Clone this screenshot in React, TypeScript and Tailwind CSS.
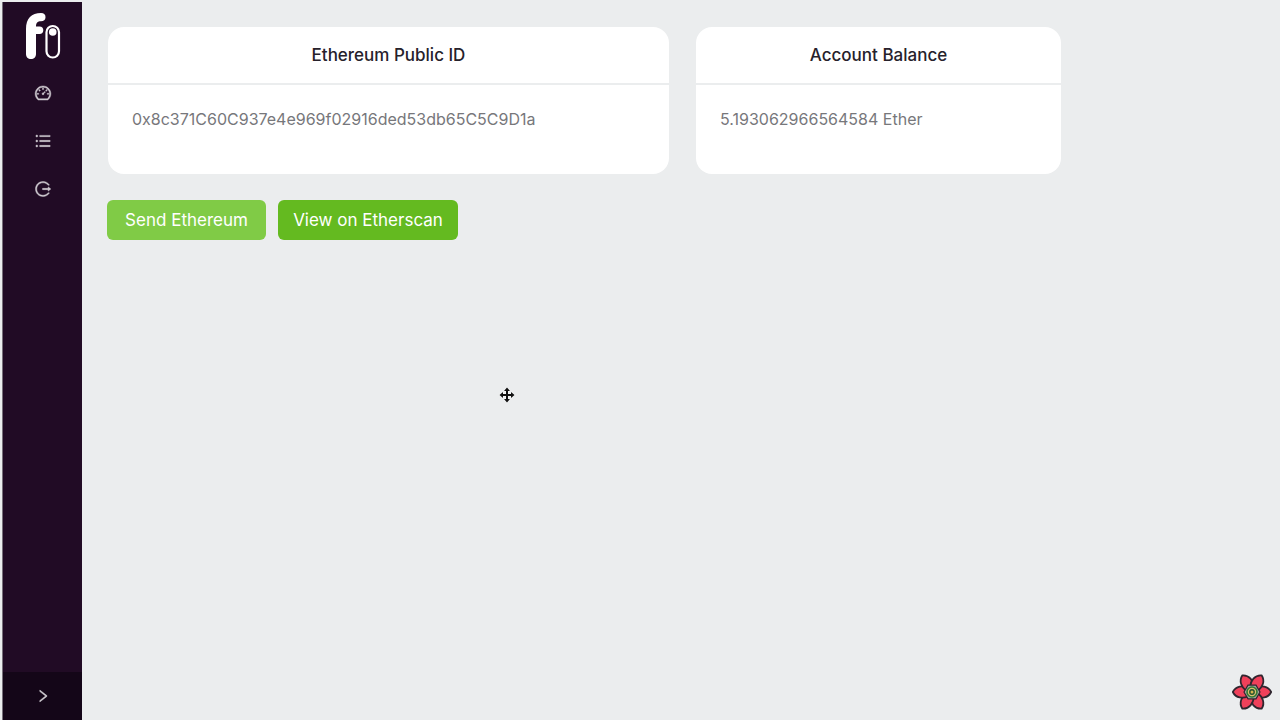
import type { ReactNode } from "react";
import {
  AiOutlineDashboard,
  AiOutlineLogout,
  AiOutlineRight,
  AiOutlineUnorderedList,
} from "react-icons/ai";

const navItems = [
  { label: "Dashboard", icon: AiOutlineDashboard },
  { label: "Transactions", icon: AiOutlineUnorderedList },
  { label: "Log out", icon: AiOutlineLogout },
];

function Logo() {
  return (
    <svg viewBox="0 0 36 48" className="h-12 w-9" aria-hidden="true">
      <path
        d="M1 42V17C1 6.500 6.500 1 16 1C19 1 20.800 2.600 20.500 5.500C20.300 8 18.800 9.200 16 9.200C12.500 9.200 11 11 11 14.500H14.500C17 14.500 18.300 16 18.300 18.300C18.300 20.600 17 22 14.500 22H11V42C11 45 9 47 6 47C3 47 1 45 1 42Z"
        fill="#fff"
      />
      <rect x="21.500" y="14" width="12.500" height="31.500" rx="6.250" fill="none" stroke="#fff" strokeWidth="2.200" />
      <circle cx="27.750" cy="20" r="3.800" fill="#fff" />
    </svg>
  );
}

function Sidebar() {
  return (
    <aside className="ml-0.5 mt-0.5 flex w-20 shrink-0 flex-col border-l border-[#77707a] bg-[#210b25] text-[#d0cbd1]">
      <a href="#home" aria-label="Home" className="flex h-17 items-center justify-center">
        <Logo />
      </a>
      <nav className="-mt-px flex flex-1 flex-col">
        {navItems.map(({ label, icon: Icon }) => (
          <a key={label} href="#nav" aria-label={label} className="flex h-12 items-center justify-center">
            <Icon size={18} className="stroke-current stroke-[24]" />
          </a>
        ))}
      </nav>
      <button type="button" aria-label="Expand menu" className="flex h-12 items-center justify-center bg-[#140618]">
        <AiOutlineRight size={16} className="stroke-current stroke-[24]" />
      </button>
    </aside>
  );
}

function Card({ title, children }: { title: string; children: ReactNode }) {
  return (
    <section className="rounded-2xl bg-white">
      <h2 className="border-b-2 border-[#ebedee] py-4 text-center text-[17px] leading-6 font-medium text-[#26212b]">
        {title}
      </h2>
      <p className="px-6 pt-6 pb-[45px] text-base leading-5 text-[#77777b]">{children}</p>
    </section>
  );
}

function FlowerLogo() {
  return (
    <svg viewBox="-20 -20 40 40" className="size-10" aria-hidden="true">
      <g fill="#f0405a" stroke="#30262f" strokeWidth="1.800" strokeLinejoin="round">
        {[0, 60, 120, 180, 240, 300].map((angle) => (
          <path key={angle} transform={`rotate(${angle})`} d="M4 -4.500C9 -6.500 16 -6.500 19.200 0C16 6.500 9 6.500 4 4.500Z" />
        ))}
      </g>
      <path d="M-8 0L-4 -6.900H4L8 0L4 6.900H-4Z" fill="#a3a5a0" stroke="#30262f" strokeWidth="1.200" />
      <circle r="5" fill="#d9bd72" stroke="#2f7a32" strokeWidth="1.600" />
      <circle r="2.200" fill="#d8b44c" stroke="#24532f" strokeWidth="1.400" />
    </svg>
  );
}

function MoveCursor() {
  return (
    <svg viewBox="0 0 16 16" className="size-4" aria-hidden="true">
      <path
        d="M8 0.500L11 4H9V7H12V5L15.500 8L12 11V9H9V12H11L8 15.500L5 12H7V9H4V11L0.500 8L4 5V7H7V4H5Z"
        fill="#111"
        stroke="#fff"
        strokeWidth="0.800"
        paintOrder="stroke"
      />
    </svg>
  );
}

export default function App() {
  return (
    <div className="relative flex min-h-screen bg-[#ebedee] font-['Inter','Liberation_Sans',sans-serif]">
      <Sidebar />
      <main className="flex-1 px-[26px] pt-[27px]">
        <div className="grid grid-cols-[561fr_365fr_166fr] gap-[27px]">
          <Card title="Ethereum Public ID">0x8c371C60C937e4e969f02916ded53db65C5C9D1a</Card>
          <Card title="Account Balance">5.193062966564584 Ether</Card>
        </div>
        <div className="mt-[26px] -ml-px flex gap-3">
          <button type="button" className="h-10 w-[159px] rounded-md bg-[#80cb46] text-[17px] leading-6 text-white">
            Send Ethereum
          </button>
          <button type="button" className="h-10 w-[180px] rounded-md bg-[#64ba20] text-[17px] leading-6 text-white">
            View on Etherscan
          </button>
        </div>
      </main>
      <div className="pointer-events-none absolute top-[387px] left-[499px]">
        <MoveCursor />
      </div>
      <button type="button" aria-label="Open query tools" className="fixed right-2 bottom-2">
        <FlowerLogo />
      </button>
    </div>
  );
}
